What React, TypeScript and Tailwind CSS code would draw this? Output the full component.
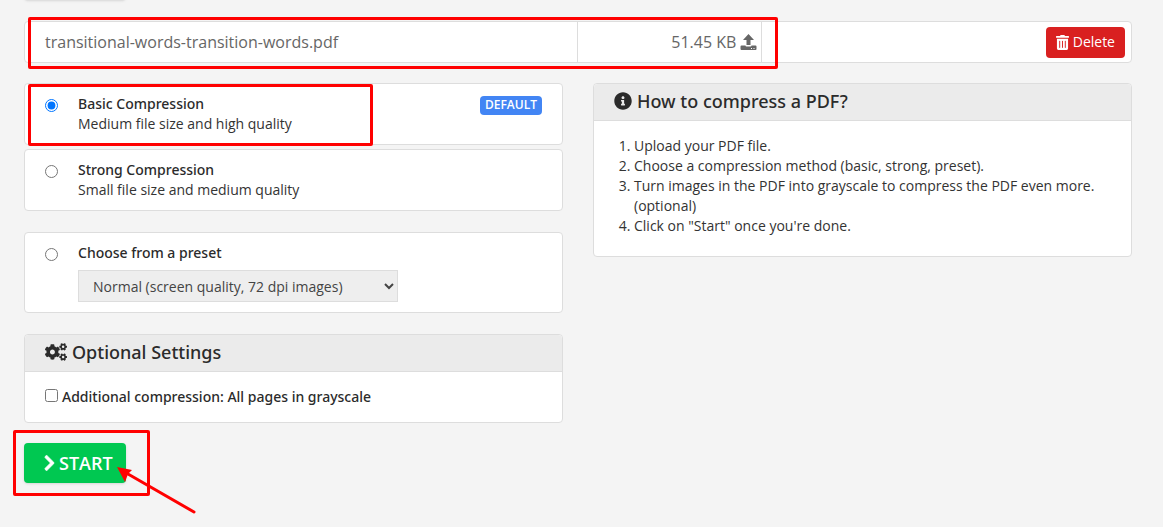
import { FaChevronRight, FaCogs, FaInfoCircle, FaTrashAlt } from "react-icons/fa";
import type { ReactNode } from "react";

function Card({ children, className = "" }: { children: ReactNode; className?: string }) {
  return <section className={`rounded border border-[#dddddd] bg-white ${className}`}>{children}</section>;
}

function CardHeading({ icon, children }: { icon: ReactNode; children: ReactNode }) {
  return (
    <h2 className="flex items-center gap-[5px] rounded-t border-b border-[#dddddd] bg-[#ebebeb] px-5 pt-[7px] pb-[9px] font-['Noto_Sans','Open_Sans',sans-serif] text-lg leading-5 font-medium text-[#2b2b2b]">
      {icon}
      {children}
    </h2>
  );
}

function UploadIcon() {
  return (
    <svg viewBox="0 0 17 16" className="h-4 w-[17px]" fill="currentColor" aria-hidden="true">
      <path d="M8.5 0 14 6h-3.500v5h-4V6H3z" />
      <path fillRule="evenodd" d="M1.500 11.500H5.500Q5.500 12.500 6.500 12.500H10.500Q11.500 12.500 11.500 11.500H15.500Q16.500 11.500 16.500 12.500V15Q16.500 16 15.500 16H1.500Q.500 16 .500 15V12.500Q.500 11.500 1.500 11.500zM11 14v1h1v-1zm2.500 0v1h1v-1z" />
    </svg>
  );
}

function Option({ id, title, detail, badge, checked }: { id: string; title: string; detail: string; badge?: string; checked?: boolean }) {
  return (
    <Card className="flex items-start px-5 py-[10px]">
      <input id={id} type="radio" name="method" defaultChecked={checked} className="mt-[5px] mr-5 size-[13px] shrink-0" />
      <label htmlFor={id} className="flex-1">
        <span className="block font-['Noto_Sans','Open_Sans',sans-serif] font-medium text-[#2b2b2b]">{title}</span>
        <span className="block">{detail}</span>
      </label>
      {badge && (
        <span className="mt-[2px] rounded bg-[#4285f4] px-[5px] pb-px text-xs leading-[18px] font-semibold text-white">{badge}</span>
      )}
    </Card>
  );
}

export default function App() {
  return (
    <main className="relative min-h-screen overflow-hidden bg-[#f4f4f4] pr-[31px] pl-6 font-['Open_Sans','Noto_Sans',sans-serif] text-sm leading-5 text-[#333333]">
      <div className="-mt-5 h-5 w-[102px] rounded shadow" />

      <div className="mt-[21px] grid h-[42px] grid-cols-12 rounded border border-[#dddddd] bg-white text-base text-[#666666]">
        <div className="col-span-6 flex items-center border-r border-[#dddddd] pl-5">transitional-words-transition-words.pdf</div>
        <div className="col-span-2 flex items-center justify-end gap-1 border-r border-[#dddddd] pr-1">
          51.45 KB <UploadIcon />
        </div>
        <div className="col-span-4 flex items-center justify-end pr-[6px]">
          <button className="flex h-[31px] items-center gap-1 rounded bg-[#d92020] px-[10px] text-sm text-white">
            <FaTrashAlt className="h-[15px] w-[13px]" aria-hidden="true" /> Delete
          </button>
        </div>
      </div>

      <div className="mt-5 grid grid-cols-2 items-start gap-[30px]">
        <form className="flex flex-col" onSubmit={(event) => event.preventDefault()}>
          <div className="flex flex-col gap-1">
            <Option id="basic" title="Basic Compression" detail="Medium file size and high quality" badge="DEFAULT" checked />
            <Option id="strong" title="Strong Compression" detail="Small file size and medium quality" />
          </div>

          <Card className="mt-[21px] flex items-start px-5 py-[10px]">
            <input id="preset" type="radio" name="method" className="mt-[5px] mr-5 size-[13px] shrink-0" />
            <div>
              <label htmlFor="preset" className="block font-['Noto_Sans','Open_Sans',sans-serif] font-medium text-[#2b2b2b]">Choose from a preset</label>
              <select aria-label="Preset" className="mt-[7px] block h-8 w-80 border border-[#dddddd] bg-[#eeeeee] pl-[10px] text-[#444444]">
                <option>Normal (screen quality, 72 dpi images)</option>
              </select>
            </div>
          </Card>

          <Card className="mt-[21px]">
            <CardHeading icon={<FaCogs className="h-[18px] w-[22px]" aria-hidden="true" />}>Optional Settings</CardHeading>
            <label className="flex items-start gap-1 px-5 py-[15px] font-['Noto_Sans','Open_Sans',sans-serif] font-medium text-[#2b2b2b]">
              <input type="checkbox" className="mt-[2px] size-[13px]" />
              Additional compression: All pages in grayscale
            </label>
          </Card>

          <button className="mt-5 flex h-10 w-[102px] items-center gap-1 rounded bg-[#00c851] pl-5 text-lg font-semibold text-white shadow">
            <FaChevronRight className="h-[18px] w-[11px]" stroke="currentColor" strokeWidth="24" aria-hidden="true" />START
          </button>
        </form>

        <Card>
          <CardHeading icon={<FaInfoCircle className="size-[18px]" aria-hidden="true" />}>How to compress a PDF?</CardHeading>
          <ol className="list-decimal pt-[15px] pr-5 pb-5 pl-10">
            <li>Upload your PDF file.</li>
            <li>Choose a compression method (basic, strong, preset).</li>
            <li>Turn images in the PDF into grayscale to compress the PDF even more. (optional)</li>
            <li>Click on "Start" once you're done.</li>
          </ol>
        </Card>
      </div>

      <div className="pointer-events-none absolute top-[17px] left-7 h-[52px] w-[750px] rounded-[2px] border-3 border-[#ff0000]" />
      <div className="pointer-events-none absolute top-[84px] left-7 h-[62px] w-[345px] rounded-[2px] border-3 border-[#ff0000]" />
      <div className="pointer-events-none absolute top-[430px] left-[13px] h-[66px] w-[137px] rounded-[2px] border-3 border-[#ff0000]" />
      <svg viewBox="0 0 80 50" className="pointer-events-none absolute top-[465px] left-[116px] h-[50px] w-20" aria-hidden="true">
        <path d="M12 9 78 47" stroke="#ff0000" strokeWidth="3" strokeLinecap="round" />
        <path d="M1 2 16 5 12 9 9 17z" fill="#ff0000" />
      </svg>
    </main>
  );
}
